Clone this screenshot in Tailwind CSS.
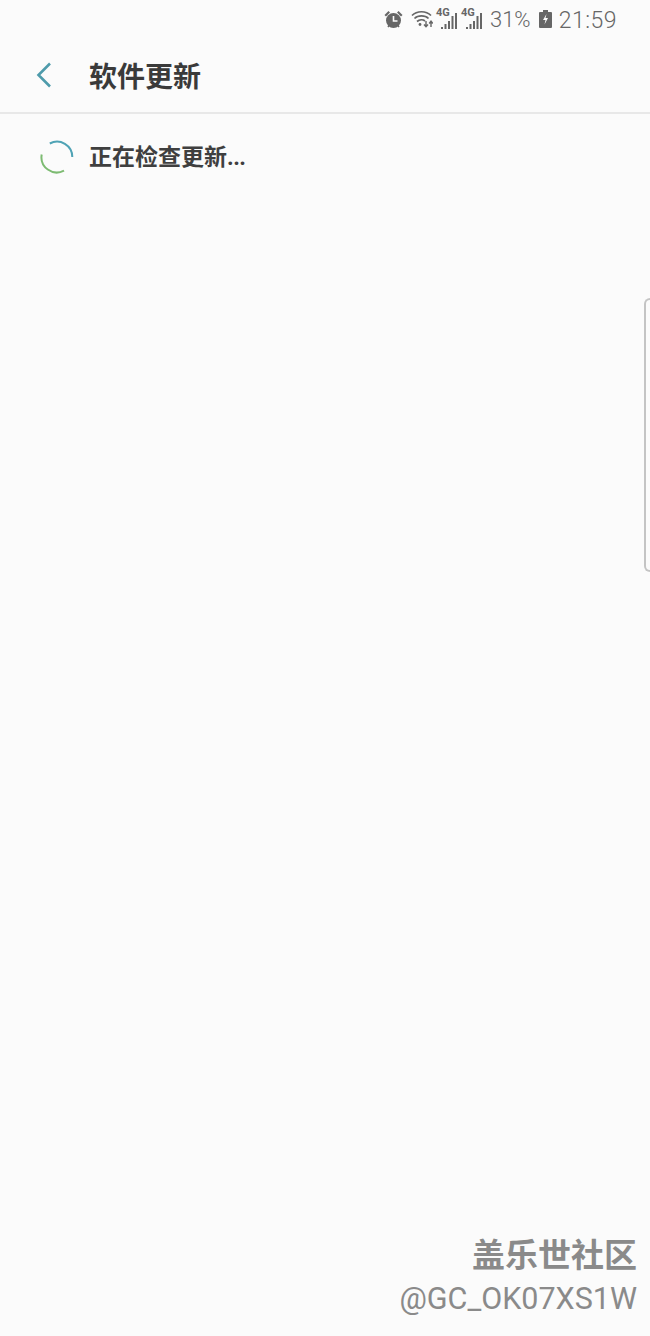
<!DOCTYPE html>
<html lang="zh-CN">
<head>
  <meta charset="UTF-8" />
  <meta name="viewport" content="width=device-width, initial-scale=1.0"/>
  <title>软件更新</title>
  <script src="https://cdn.jsdelivr.net/npm/@tailwindcss/browser@4"></script>
</head>
<body class="bg-[#fbfbfb] overflow-hidden font-['Noto_Sans_CJK_SC',sans-serif]">
  <div class="relative w-[650px] h-[1336px]">

    <!-- status bar -->
    <div class="h-[38px] flex items-center justify-end pr-[33px] text-[#666666]">
      <svg class="w-[19px] h-[19px] mr-[8px]" viewBox="0 0 19 19" fill="#666666">
        <circle cx="9.5" cy="10.5" r="7.5"/>
        <path d="M0.5 5 L4.5 1 L6 2.5 L2 6.5 Z M18.5 5 L14.5 1 L13 2.5 L17 6.5 Z"/>
        <path d="M9.5 6 V11 H13.5" fill="none" stroke="#fbfbfb" stroke-width="1.6"/>
        <path d="M4 17 L5.5 15 M15 17 L13.5 15" stroke="#666666" stroke-width="1.6"/>
      </svg>
      <svg class="w-[22px] h-[18px] mr-[3px]" viewBox="0 0 22 18" fill="none" stroke="#666666">
        <path d="M1 5.5 C6 0.5 15 0.5 20 5.5" stroke-width="1.7"/>
        <path d="M3.5 8.5 C7 5 14 5 17.5 8.5" stroke-width="1.7"/>
        <path d="M6 11.5 C8.5 9.5 12 9.5 14 11" stroke-width="1.7"/>
        <circle cx="9" cy="14.5" r="1.4" fill="#666666" stroke="none"/>
        <path d="M15 11 V16.5 M13 14.5 L15 16.8 L17 14.5" stroke-width="1.4"/>
        <path d="M20 17 V11.5 M18.2 13.5 L20 11.2 L21.8 13.5" stroke-width="1.4"/>
      </svg>
      <div class="flex gap-[3px] mr-[7px]">
        <div class="relative w-[22px] h-[20px]">
          <span class="absolute left-0 top-[-2px] font-['Roboto',sans-serif] font-bold text-[11px] leading-[12px]">4G</span>
          <svg class="w-[22px] h-[20px]" viewBox="0 0 22 20">
            <path d="M5 18 h2 v2 h-2 z M8.5 15 h2 v5 h-2 z M12 12 h2 v8 h-2 z M15.5 7 h2 v13 h-2 z M19 4 h2 v16 h-2 z" fill="#666666"/>
          </svg>
        </div>
        <div class="relative w-[22px] h-[20px]">
          <span class="absolute left-0 top-[-2px] font-['Roboto',sans-serif] font-bold text-[11px] leading-[12px]">4G</span>
          <svg class="w-[22px] h-[20px]" viewBox="0 0 22 20">
            <path d="M5 18 h2 v2 h-2 z M8.5 15 h2 v5 h-2 z M12 12 h2 v8 h-2 z M15.5 7 h2 v13 h-2 z M19 4 h2 v16 h-2 z" fill="#666666"/>
          </svg>
        </div>
      </div>
      <span class="font-['Roboto',sans-serif] font-light text-[22px] leading-none mr-[8px] pt-[2px]">31%</span>
      <svg class="w-[13px] h-[18px] mr-[7px]" viewBox="0 0 13 18">
        <path d="M4 0 h5 v2 h3 a1 1 0 0 1 1 1 v14 a1 1 0 0 1 -1 1 h-11 a1 1 0 0 1 -1 -1 v-14 a1 1 0 0 1 1 -1 h3 z" fill="#666666"/>
        <path d="M7.5 4 L4 10 H6.5 L5.5 14.5 L9 8 H6.5 Z" fill="#fbfbfb"/>
      </svg>
      <span class="font-['Roboto',sans-serif] font-light text-[23px] leading-none tracking-[0.5px] pt-[2px]">21:59</span>
    </div>

    <!-- header -->
    <div class="h-[76px] flex items-center border-b-2 border-[#e8e8e8]">
      <svg class="w-[16px] h-[26px] ml-[36px] mr-[37px]" viewBox="0 0 16 26" fill="none" stroke="#4e9bab" stroke-width="2.6">
        <path d="M14 1.5 L2.5 13 L14 24.5"/>
      </svg>
      <h1 class="text-[28px] font-bold leading-none text-[#3a3a3a]">软件更新</h1>
    </div>

    <!-- checking row -->
    <div class="flex items-center pl-[40px] pt-[26px]">
      <svg class="w-[34px] h-[34px] mr-[15px]" viewBox="0 0 34 34" fill="none" stroke-width="2">
        <path d="M9.8 3.5 A15.3 15.3 0 0 1 32.3 17" stroke="#4fa3b5"/>
        <path d="M1.7 14.5 A15.3 15.3 0 0 0 24 30.6" stroke="#7dbb72"/>
      </svg>
      <p class="text-[23px] font-bold leading-none text-[#3f3f3f] pb-[2px]">正在检查更新<span class="font-['Roboto',sans-serif] tracking-[-0.5px]">...</span></p>
    </div>

    <!-- edge panel handle -->
    <div class="absolute right-0 top-[298px] w-[6px] h-[274px] border-l-2 border-y-2 border-[#c4c4c4] rounded-l-[8px]"></div>

    <!-- watermark -->
    <div class="absolute right-[13px] top-[1233px] text-right text-[#8a8a8a]">
      <div class="text-[33px] font-semibold leading-[40px]">盖乐世社区</div>
      <div class="font-['Roboto',sans-serif] text-[30.5px] leading-[40px] mt-[6px]">@GC_OK07XS1W</div>
    </div>
  </div>
</body>
</html>
